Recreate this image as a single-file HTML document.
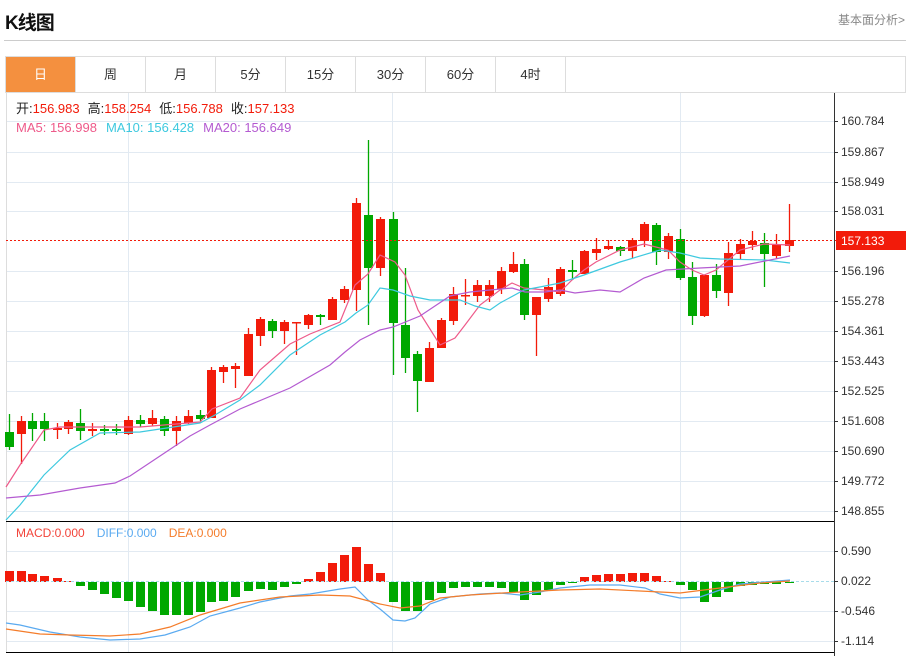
<!DOCTYPE html>
<html><head><meta charset="utf-8">
<style>
*{margin:0;padding:0;box-sizing:border-box}
body{width:910px;height:656px;background:#fff;font-family:"Liberation Sans","Noto Sans CJK SC",sans-serif;position:relative;overflow:hidden}
.t{position:absolute;left:5px;top:8px;font-size:19px;font-weight:bold;color:#111;letter-spacing:-1px}
.r{position:absolute;right:5px;top:11px;font-size:12px;color:#888}
.hl{position:absolute;left:4px;top:40px;width:902px;height:1px;background:#ccc}
.tabs{position:absolute;left:5px;top:56px;width:901px;height:37px;border:1px solid #ddd;display:flex}
.tabs div{flex:0 0 70px;width:70px;height:35px;border-right:1px solid #ddd;text-align:center;line-height:35px;font-size:13px;color:#333}
.tabs div.a{background:#f4903f;color:#fff}
svg{position:absolute;left:0;top:0}
</style></head><body>
<div class="t">K线图</div>
<div class="r">基本面分析&gt;</div>
<div class="hl"></div>
<div class="tabs"><div class="a">日</div><div>周</div><div>月</div><div>5分</div><div>15分</div><div>30分</div><div>60分</div><div>4时</div></div>
<svg id="s" width="910" height="656" xmlns="http://www.w3.org/2000/svg"></svg>
<script>
var s=document.getElementById('s'),h='';
function L(x1,y1,x2,y2,c,w,d){h+='<line x1="'+x1+'" y1="'+y1+'" x2="'+x2+'" y2="'+y2+'" stroke="'+c+'" stroke-width="'+(w||1)+'"'+(d?' stroke-dasharray="'+d+'"':'')+'/>';}
function T(x,y,t,c,sz){h+='<text x="'+x+'" y="'+y+'" fill="'+c+'" font-size="'+(sz||12)+'" font-family="Liberation Sans, Noto Sans CJK SC, sans-serif">'+t+'</text>';}
var G='#e2eaf2';
var lab=[['160.784',121],['159.867',152],['158.949',182],['158.031',211],['156.196',271],['155.278',301],['154.361',331],['153.443',361],['152.525',391],['151.608',421],['150.690',451],['149.772',481],['148.855',511]];
lab.forEach(function(a){L(6,a[1]+.5,834,a[1]+.5,G);L(834,a[1]+.5,838,a[1]+.5,'#333');T(841,a[1]+4,a[0],'#333');});
[['0.590',551],['-0.546',611],['-1.114',641]].forEach(function(a){L(6,a[1]+.5,834,a[1]+.5,G);L(834,a[1]+.5,838,a[1]+.5,'#333');T(841,a[1]+4,a[0],'#333');});
L(834,581.5,838,581.5,'#333');T(841,585,'0.022','#333');
[128.5,392.5,680.5].forEach(function(x){L(x,93,x,652,G);});
L(6.5,93,6.5,652,'#ddd');
var C=[[9,432,447,414,450],[21,434,421,416,464],[32,421,429,413,441],[44,421,429,413,441],[57,430,428,423,439],[68,429,422,420,434],[80,423,431,409,440],[92,431,429,423,436],[104,429,431,425,435],[116,429,431,424,435],[128,434,420,416,435],[140,420,424,415,427],[152,424,418,410,426],[164,419,431,416,436],[176,431,421,416,446],[188,423,416,410,424],[200,415,419,410,421],[211,418,370,367,418],[223,372,367,365,383],[235,369,366,363,388],[248,376,334,328,376],[260,336,319,317,346],[272,321,331,319,338],[284,331,322,320,344],[296,323,322,322,355],[308,325,315,314,329],[320,315,317,314,325],[332,320,299,297,320],[344,300,289,286,303],[356,290,203,198,311],[368,215,268,140,325],[380,268,219,217,276],[393,219,323,212,375],[405,325,358,268,373],[417,354,381,351,412],[429,382,348,342,382],[441,348,320,318,348],[453,321,294,287,325],[465,296,295,279,305],[477,296,285,280,302],[489,296,285,280,302],[501,289,271,267,294],[513,272,264,252,273],[524,264,315,259,320],[536,315,297,297,356],[548,299,287,278,302],[560,294,269,267,296],[572,270,272,260,280],[584,274,251,250,274],[596,253,249,238,260],[608,249,246,240,250],[620,247,251,246,256],[632,251,240,238,258],[644,241,224,222,247],[656,225,252,223,265],[668,252,236,233,259],[680,239,278,229,280],[692,277,316,262,325],[704,316,275,275,317],[716,275,291,264,298],[728,293,253,242,306],[740,254,244,239,260],[752,245,241,231,250],[764,243,254,233,287],[776,256,245,234,259],[789,246,240,204,252]];
C.forEach(function(c){var up=c[2]<c[1],col=up?'#f21b0a':'#00a800';L(c[0]+.5,c[3],c[0]+.5,c[4],col,1.3);var t=Math.min(c[1],c[2]),b=Math.max(c[1],c[2]);h+='<rect x="'+(c[0]-4)+'" y="'+t+'" width="9" height="'+Math.max(b-t,1.5)+'" fill="'+col+'"/>';});
function P(pts,c,w){h+='<polyline fill="none" stroke="'+c+'" stroke-width="'+(w||1.2)+'" points="'+pts.map(function(p){return p.join(',')}).join(' ')+'"/>';}
P([[6,487],[20,465],[44,430],[60,427],[100,427],[140,427],[200,422],[212,409],[240,398],[260,370],[290,344],[310,334],[340,322],[355,285],[368,274],[380,255],[395,262],[405,275],[418,310],[440,345],[455,338],[465,325],[480,305],[500,290],[512,283],[524,288],[545,290],[560,292],[572,280],[584,270],[596,262],[620,250],[644,244],[668,250],[680,262],[692,270],[704,275],[716,270],[740,250],[764,244],[790,245]],'#ee5a8a');
P([[6,520],[20,505],[44,475],[70,450],[100,433],[140,432],[200,423],[215,415],[240,400],[260,385],[290,355],[320,335],[345,322],[356,313],[368,305],[380,288],[393,290],[410,296],[430,300],[460,300],[475,306],[490,310],[500,303],[524,290],[545,286],[560,283],[584,275],[620,262],[660,250],[680,253],[700,258],[720,259],[765,260],[790,263]],'#3ec9df');
P([[6,498],[40,495],[80,488],[115,483],[130,476],[160,456],[190,436],[210,425],[240,409],[290,388],[330,365],[345,352],[360,340],[380,330],[393,327],[420,316],[450,296],[470,292],[490,290],[512,288],[525,292],[545,292],[560,290],[575,293],[600,290],[620,292],[644,278],[666,270],[700,268],[740,266],[790,256]],'#b45bd1');
L(6,240.5,834,240.5,'#f21b0a',1,'2,2');
h+='<rect x="836" y="231" width="70" height="19" fill="#f21b0a"/>';L(834,240.5,838,240.5,'#f21b0a');T(841,245,'157.133','#fff');
var M=[11,11,8,6,4,1,-4,-8,-12,-16,-19,-25,-29,-33,-33,-33,-30,-20,-19,-15,-9,-7,-8,-5,-2,3,10,19,27,35,18,9,-20,-29,-29,-18,-11,-6,-5,-5,-5,-6,-10,-18,-13,-8,-3,-1,5,7,8,8,9,9,6,1,-3,-8,-20,-15,-10,-4,-3,-2,-2,-1];
M.forEach(function(v,i){var x=C[i][0]-4,col=v>0?'#f21b0a':'#00a800';h+='<rect x="'+x+'" y="'+(v>0?582-v:582)+'" width="9" height="'+Math.abs(v)+'" fill="'+col+'"/>';});
L(6,581.5,834,581.5,'#a8dcea',1,'3,2');
P([[6,623],[20,625],[50,632],[80,637],[110,640],[140,639],[165,635],[190,627],[210,616],[240,608],[260,602],[290,596],[310,594],[340,589],[355,587],[368,600],[380,609],[393,620],[405,621],[415,618],[430,604],[450,597],[480,594],[500,593],[520,595],[540,592],[560,588],[590,585],[620,585],[645,588],[660,594],[680,598],[700,597],[720,590],[740,584],[790,580]],'#5aaaf0');
P([[6,629],[40,634],[70,635],[110,636],[140,634],[170,627],[200,615],[240,603],[280,597],[320,595],[350,596],[380,604],[400,608],[420,606],[440,598],[470,595],[520,592],[560,590],[600,589],[640,591],[680,593],[720,588],[760,583],[790,581]],'#f47c2a');
L(6,521.5,834,521.5,'#000');L(6,652.5,834,652.5,'#000');L(834.5,93,834.5,656,'#333');
h+='<text x="16" y="113" font-size="13" font-family="Liberation Sans, Noto Sans CJK SC, sans-serif"><tspan fill="#222">开:</tspan><tspan fill="#f21b0a">156.983</tspan><tspan fill="#222" dx="8">高:</tspan><tspan fill="#f21b0a">158.254</tspan><tspan fill="#222" dx="8">低:</tspan><tspan fill="#f21b0a">156.788</tspan><tspan fill="#222" dx="8">收:</tspan><tspan fill="#f21b0a">157.133</tspan></text>';
h+='<text x="16" y="132" font-size="13" font-family="Liberation Sans, sans-serif"><tspan fill="#ee5a8a">MA5: 156.998</tspan><tspan fill="#3ec9df" dx="9">MA10: 156.428</tspan><tspan fill="#b45bd1" dx="9">MA20: 156.649</tspan></text>';
h+='<text x="16" y="537" font-size="12" font-family="Liberation Sans, sans-serif"><tspan fill="#f2443a">MACD:0.000</tspan><tspan fill="#5aaaf0" dx="12">DIFF:0.000</tspan><tspan fill="#f47c2a" dx="12">DEA:0.000</tspan></text>';
s.innerHTML=h;
</script>
</body></html>
